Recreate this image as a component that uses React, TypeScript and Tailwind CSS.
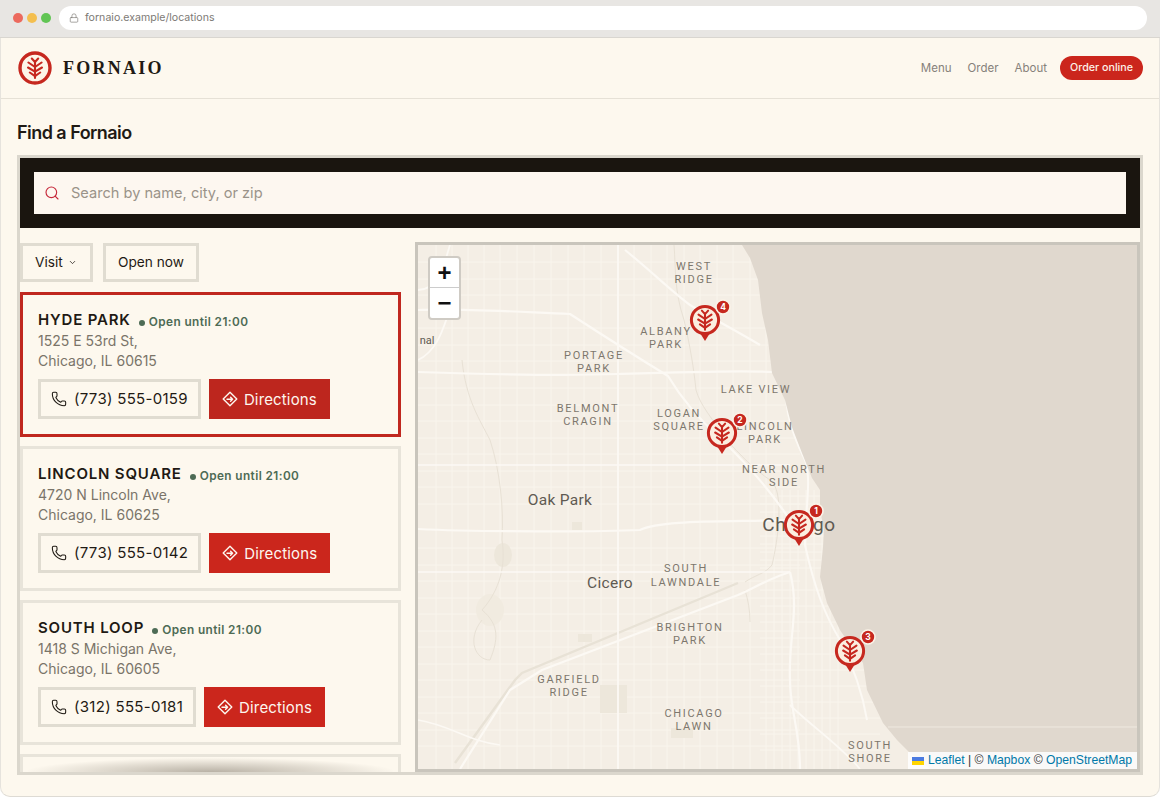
import React from "react";
import { ChevronDown, Lock, Phone, Search } from "lucide-react";

const RED = "#c6281f";

function Sprig({ cx, cy, s = 1, color = RED }: { cx: number; cy: number; s?: number; color?: string }) {
  return (
    <g transform={`translate(${cx} ${cy}) scale(${s})`} stroke={color} strokeWidth={2.1} fill="none" strokeLinecap="round">
      <path d="M0 10.5V-6" />
      <path d="M0 -5.5L-3.2 -9M0 -5.5L3.2 -9" />
      <path d="M0 -0.5L-6.6 -5M0 -0.5L6.6 -5" />
      <path d="M0 4.2L-7 0M0 4.2L7 0" />
      <path d="M0 8.6L-5.2 5M0 8.6L5.2 5" />
    </g>
  );
}

function Logo() {
  return (
    <svg width="34" height="34" viewBox="0 0 34 34" className="shrink-0">
      <circle cx="17" cy="17" r="15" fill="#fdf5e8" stroke={RED} strokeWidth="3.4" />
      <Sprig cx={17} cy={16.5} />
    </svg>
  );
}

function DirectionsIcon() {
  return (
    <svg width="16" height="16" viewBox="0 0 16 16" fill="none" stroke="currentColor" strokeWidth="1.4" strokeLinecap="round" strokeLinejoin="round" className="shrink-0">
      <path d="M8 1.2L14.8 8L8 14.8L1.2 8Z" />
      <path d="M5 8.2H10.6M8.6 6.2L10.6 8.2L8.6 10.2" />
    </svg>
  );
}

const labels: [string, number, number][] = [
  ["WEST", 694, 270], ["RIDGE", 694, 283], ["ALBANY", 666, 335], ["PARK", 666, 348],
  ["PORTAGE", 594, 359], ["PARK", 594, 372], ["LAKE VIEW", 756, 393],
  ["BELMONT", 588, 412], ["CRAGIN", 588, 425], ["LOGAN", 679, 417], ["SQUARE", 679, 430],
  ["LINCOLN", 765, 430], ["PARK", 765, 443], ["NEAR NORTH", 784, 473], ["SIDE", 784, 486],
  ["SOUTH", 686, 572], ["LAWNDALE", 686, 586], ["BRIGHTON", 690, 631], ["PARK", 690, 644],
  ["GARFIELD", 569, 683], ["RIDGE", 569, 696], ["CHICAGO", 694, 717], ["LAWN", 694, 730],
  ["SOUTH", 870, 749], ["SHORE", 870, 762],
];

const pins: [number, number, number, number, number][] = [
  [799, 525, 816, 511, 1],
  [722, 433, 740, 420, 2],
  [850, 651, 868, 637, 3],
  [705, 320, 723, 307, 4],
];

const gridX = [436, 452, 468, 484, 500, 517, 534, 551, 568, 584, 601, 634, 651, 667, 684, 700, 717, 733, 750, 766];
const gridY = [262, 279, 295, 328, 345, 361, 388, 405, 421, 438, 454, 471, 487, 504, 548, 565, 581, 598, 614, 631, 647, 664, 680, 697, 713, 730, 746];
const fineX = [774, 782, 790, 798, 806, 814, 822, 830, 838];
const fineY = [496, 504, 512, 520, 536, 544, 552, 560, 568, 590, 606, 622, 638, 654, 670, 686, 702, 718, 734, 750];

function MapArt() {
  return (
    <svg viewBox="418 245 719 524" className="block h-full w-full" preserveAspectRatio="none">
      <rect x="418" y="245" width="719" height="524" fill="#f4eee5" />
      <g stroke="#f9f5ed" strokeWidth="1" fill="none">
        {gridX.map((x) => <path key={x} d={`M${x} 245V769`} />)}
        {gridY.map((y) => <path key={y} d={`M418 ${y}H800`} />)}
        {fineX.map((x) => <path key={x} d={`M${x} 490V769`} />)}
        {fineY.map((y) => <path key={y} d={`M760 ${y}H880`} />)}
      </g>
      <g fill="#ede7db">
        <rect x="600" y="685" width="27" height="28" />
        <rect x="671" y="728" width="22" height="10" />
        <rect x="572" y="522" width="10" height="8" />
        <rect x="578" y="634" width="14" height="8" />
        <ellipse cx="503" cy="555" rx="9" ry="12" />
        <ellipse cx="490" cy="610" rx="14" ry="16" fill="#f1ebe0" />
      </g>
      <g stroke="#e8e1d5" strokeWidth="1" fill="none">
        <path d="M674 245C676 270 674 290 684 320C690 345 694 370 696 390C700 405 712 418 725 438C740 455 755 470 770 480C785 490 778 540 772 565C765 574 755 575 745 582" />
        <path d="M462 360C466 400 480 420 490 440C500 470 504 510 502 540C506 565 500 590 482 610C500 625 498 640 490 660C476 660 466 640 482 620" />
        <path d="M745 590C748 600 750 610 750 622" />
      </g>
      <path d="M738 583L522 673L515 680L455 763" stroke="#e8e2d6" strokeWidth="2.4" fill="none" />
      <g stroke="#fcf9f4" strokeWidth="2.2" fill="none" strokeLinejoin="round">
        <path d="M418 310C460 308 520 312 570 314C610 340 650 365 668 376C680 396 700 420 720 438C745 462 770 490 790 520" />
        <path d="M625 250C650 270 670 290 690 305C715 320 735 330 760 345" />
        <path d="M418 529C480 532 600 532 640 530C660 520 720 522 790 520" />
        <path d="M790 572C770 578 750 590 738 595L542 670L510 690L460 769" />
        <path d="M790 572C800 610 788 640 790 680C790 710 800 730 800 769" />
        <path d="M418 372C480 374 560 376 618 374C680 372 740 370 772 372" />
        <path d="M618 245V769" strokeWidth="1.8" />
        <path d="M418 290C440 290 445 260 450 245" strokeWidth="1.8" />
        <path d="M418 360C440 350 445 320 450 310" strokeWidth="1.8" />
        <path d="M418 720C450 725 470 742 500 745" strokeWidth="1.6" />
        <path d="M418 465H790" strokeWidth="1.4" />
        <path d="M418 572H790" strokeWidth="1.4" />
        <path d="M790 360C780 400 790 430 805 460C812 480 805 510 805 545C815 590 825 615 840 640C850 660 862 690 867 720" strokeWidth="2" />
        <path d="M790 705C810 725 840 745 860 769" strokeWidth="1.8" />
      </g>
      <path
        d="M742 245L750 258L758 280L762 313L768 340L772 373L785 400L792 427L802 453L812 478L820 490L820 510L824 530L823 547L820 577L827 603L840 630L852 648L863 663L867 690L883 723L897 740L910 753L930 769H1137V245Z"
        fill="#e0d8ce"
      />
      <path d="M888 727H1137" stroke="#f4efe6" strokeWidth="0.8" />

      <g fontFamily="Roboto, 'Liberation Sans', sans-serif" fontSize="11" letterSpacing="1.7" fill="#7d776d" textAnchor="middle">
        {labels.map(([t, x, y]) => <text key={`${t}${x}${y}`} x={x} y={y}>{t}</text>)}
      </g>
      <g fontFamily="Roboto, 'Liberation Sans', sans-serif" fill="#5f5a52" textAnchor="middle">
        <text x="560" y="505" fontSize="15.5" letterSpacing="0.3">Oak Park</text>
        <text x="610" y="588" fontSize="15.5" letterSpacing="0.3">Cicero</text>
        <text x="799" y="531" fontSize="19" letterSpacing="0.6">Chicago</text>
        <text x="427" y="344" fontSize="11" textAnchor="middle">nal</text>
      </g>

      {pins.map(([x, y, bx, by, n]) => (
        <g key={n}>
          <path d={`M${x - 5} ${y + 13}L${x} ${y + 21}L${x + 5} ${y + 13}Z`} fill={RED} />
          <circle cx={x} cy={y} r="13.6" fill="#fbeee0" stroke={RED} strokeWidth="3" />
          <Sprig cx={x} cy={y - 0.5} s={0.98} />
          <circle cx={bx} cy={by} r="7" fill="#c6281f" stroke="#fbf3e8" strokeWidth="1.6" />
          <text x={bx} y={by + 3} fontSize="8.5" fontWeight="700" fill="#fff" textAnchor="middle" fontFamily="Inter, sans-serif">{n}</text>
        </g>
      ))}
    </svg>
  );
}

type Loc = { name: string; addr: string; city: string; phone: string; active?: boolean };

function Card({ name, addr, city, phone, active }: Loc) {
  return (
    <div className={`h-[145px] shrink-0 border-[3px] px-[15px] pt-[14px] ${active ? "border-[#c0281f]" : "border-[#e8e4da]"}`}>
      <div className="flex items-baseline h-[21px]">
        <span className="text-[15px] leading-[21px] font-semibold tracking-[0.055em] text-[#1f1a14]">{name}</span>
        <span className="ml-2 mr-[4px] inline-block size-[6px] rounded-full bg-[#4d6b55] self-center translate-y-[3px]" />
        <span className="text-[11.8px] font-semibold tracking-[0.035em] text-[#4d6b55] self-center translate-y-[3px]">Open until 21:00</span>
      </div>
      <p className="mt-[1px] text-[14px] leading-[20px] text-[#7a7469]">{addr}<br />{city}</p>
      <div className="mt-[8px] flex gap-2">
        <div className="flex h-10 items-center gap-[7px] border-[3px] border-[#e0dcd1] pl-[10px] pr-[10px] text-[15px] tracking-[0.02em] text-[#1f1a14]">
          <Phone size={16} strokeWidth={1.6} />
          <span>{phone}</span>
        </div>
        <div className={`flex h-10 items-center gap-[6px] px-[13px] text-[15px] tracking-[0.01em] text-[#fdf6ef] ${active ? "bg-[#bd261e]" : "bg-[#cb261c]"}`}>
          <DirectionsIcon />
          <span className="translate-y-[1px]">Directions</span>
        </div>
      </div>
    </div>
  );
}

export default function App() {
  const locs: Loc[] = [
    { name: "HYDE PARK", addr: "1525 E 53rd St,", city: "Chicago, IL 60615", phone: "(773) 555-0159", active: true },
    { name: "LINCOLN SQUARE", addr: "4720 N Lincoln Ave,", city: "Chicago, IL 60625", phone: "(773) 555-0142" },
    { name: "SOUTH LOOP", addr: "1418 S Michigan Ave,", city: "Chicago, IL 60605", phone: "(312) 555-0181" },
  ];
  return (
    <div className="h-[797px] w-[1160px] overflow-hidden bg-white font-['Inter',sans-serif]">
      <div className="flex h-[38px] items-center border-b border-[#d9d6d0] bg-[#e8e6e3] pl-[13px] pr-[13px] pb-[1px]">
        <div className="flex gap-[4px]">
          <span className="size-[10px] rounded-full bg-[#ec6a5e]" />
          <span className="size-[10px] rounded-full bg-[#f4bf4f]" />
          <span className="size-[10px] rounded-full bg-[#61c554]" />
        </div>
        <div className="ml-[8px] flex h-[24px] flex-1 items-center gap-[6px] rounded-full bg-white pl-[10px] text-[10.6px] text-[#7d7a75]">
          <Lock size={10} strokeWidth={1.6} />
          <span>fornaio.example/locations</span>
        </div>
      </div>

      <div className="h-[759px] rounded-b-[10px] border-x border-b border-x-[#e6e3dd] border-b-[#dedbd4] bg-[#fdf8ee]">
        <header className="flex h-[61px] items-center border-b border-[#e6e1d6] pl-[17px] pr-[16px]">
          <Logo />
          <span className="ml-[11px] font-['Liberation_Serif',serif] text-[18px] font-bold tracking-[0.125em] text-[#1f1a14]">FORNAIO</span>
          <nav className="ml-auto flex items-center text-[11.5px] text-[#86817a]">
            <span className="translate-y-[1px]">Menu</span>
            <span className="ml-[16px] translate-y-[1px]">Order</span>
            <span className="ml-[16px] translate-y-[1px]">About</span>
            <span className="ml-[13px] flex h-[24px] w-[83px] items-center justify-center rounded-full bg-[#cb261c] text-[10.7px] font-medium text-[#fdf1e8]">Order online</span>
          </nav>
        </header>

        <main className="px-[16px]">
          <h1 className="h-[56px] pt-[23px] text-[18px] leading-[22px] font-semibold tracking-[-0.03em] text-[#1f1a14]">Find a Fornaio</h1>
          <div className="h-[620px] border-[3px] border-[#dbd7cd]">
            <div className="flex h-[70px] items-center bg-[#1a150f] px-[14px]">
              <div className="flex h-[42px] flex-1 items-center gap-[11px] bg-[#fdf7f0] pl-[10px] text-[14.6px] text-[#9a9389]">
                <Search size={16} strokeWidth={1.7} className="text-[#c6283a]" />
                <span className="translate-y-[1px]">Search by name, city, or zip</span>
              </div>
            </div>
            <div className="flex h-[544px]">
              <aside className="relative flex w-[381px] shrink-0 flex-col gap-[9px] overflow-hidden pt-[15px]">
                <div className="mb-[1px] flex shrink-0 gap-[10px] text-[13.7px] text-[#1f1a14]">
                  <div className="flex h-[39px] w-[73px] items-center gap-[5px] border-[3px] border-[#e0dcd1] pl-[12px]">
                    Visit <ChevronDown size={9} strokeWidth={2} />
                  </div>
                  <div className="flex h-[39px] w-[96px] items-center justify-center border-[3px] border-[#e0dcd1]">Open now</div>
                </div>
                {locs.map((l) => <Card key={l.name} {...l} />)}
                <div className="h-[145px] shrink-0 border-[3px] border-[#e8e4da]" />
                <div className="absolute bottom-[-14px] left-[8px] h-[28px] w-[365px] bg-[radial-gradient(ellipse_at_center,rgba(90,80,65,0.42),rgba(90,80,65,0.16)_45%,rgba(90,80,65,0)_72%)]" />
              </aside>
              <div className="relative mt-[14px] ml-[14px] flex-1 overflow-hidden border-[3px] border-[#c9c5bc]">
                <MapArt />
                <div className="absolute left-[10px] top-[11px] w-[33px] overflow-hidden rounded-[4px] border-2 border-[#cfcbc4] bg-white text-[#111]">
                  <div className="flex h-[30px] items-center justify-center border-b border-[#ccc] font-['Liberation_Sans',sans-serif] text-[24px] font-bold">+</div>
                  <div className="flex h-[30px] items-center justify-center font-['Liberation_Sans',sans-serif] text-[24px] font-bold">−</div>
                </div>
                <div className="absolute bottom-0 right-0 flex h-[17px] w-[229px] items-center gap-[4px] bg-white/85 pl-[4px] font-['Liberation_Sans',sans-serif] text-[12.2px] text-[#333]">
                  <svg width="12" height="8" viewBox="0 0 12 8" className="shrink-0"><rect width="12" height="4" fill="#4C7BE1" /><rect y="4" width="12" height="4" fill="#FFD500" /></svg>
                  <span className="whitespace-nowrap"><span className="text-[#0078a8]">Leaflet</span> | © <span className="text-[#0078a8]">Mapbox</span> © <span className="text-[#0078a8]">OpenStreetMap</span></span>
                </div>
              </div>
            </div>
          </div>
        </main>
      </div>
    </div>
  );
}
